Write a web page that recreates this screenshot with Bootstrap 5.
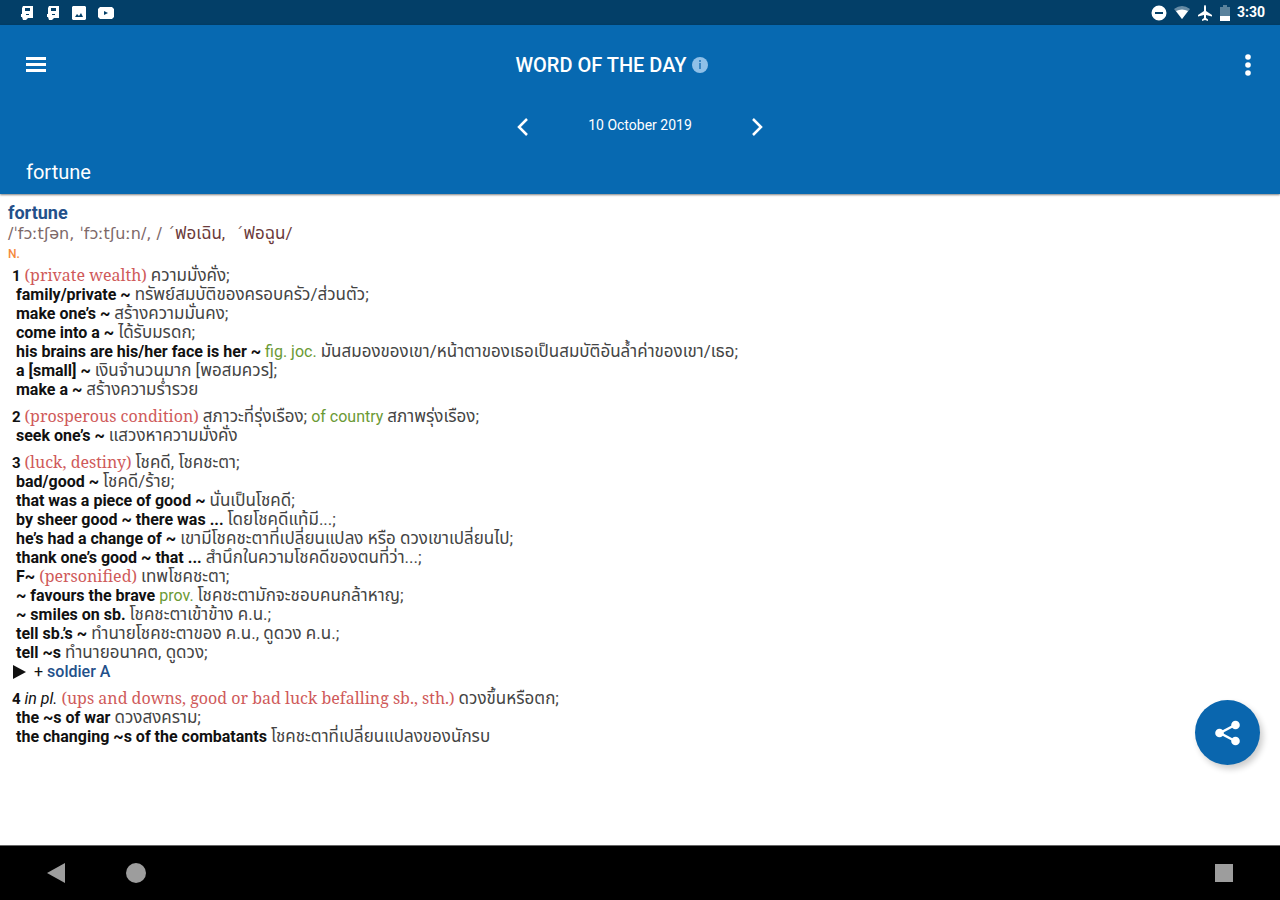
<!DOCTYPE html>
<html lang="en">
<head>
<meta charset="utf-8">
<meta name="viewport" content="width=device-width, initial-scale=1">
<title>Word of the day</title>
<link href="https://cdn.jsdelivr.net/npm/bootstrap@5.3.0/dist/css/bootstrap.min.css" rel="stylesheet">
<style>
body { font-family: Roboto, "Noto Sans Thai", "Noto Sans", sans-serif; background: #fff; color: #111; }
svg { display: block; fill: currentColor; }
.status-bar { height: 25px; background: #033f68; font-size: 14px; line-height: 25px; padding: 0 15px 0 19px; }
.status-left { gap: 10px; }
.status-right { gap: 7px; }
.app-header { background: #0769b1; box-shadow: 0 1px 2px rgba(0, 0, 0, .5); z-index: 1; }
.icon-btn { border: 0; background: none; color: #fff; padding: 0; width: 32px; height: 32px; display: flex; align-items: center; justify-content: center; }
.title-row { height: 80px; padding: 0 16px 0 20px; }
.app-title { font-size: 20px; line-height: 24px; font-weight: 500; padding-right: 60px; }
.date-row { height: 40px; }
.date-text { width: 202px; font-size: 14px; line-height: 20px; }
.entry-tab { font-size: 20px; line-height: 24px; padding: 15px 26px 10px; }
.entry { font-size: 16px; line-height: 19px; padding: 9px 8px 40px; }
.entry p { margin: 0; min-height: 19px; }
.headword { font-size: 18px; line-height: 20px; font-weight: 700; color: #23508a; }
.entry .pron { height: 21px; line-height: 21px; color: #6b4a4a; }
.ipa { font-family: "DejaVu Sans", sans-serif; font-size: 16px; line-height: 16px; color: #7d6868; white-space: pre; }
.entry .pos { height: 22px; font-size: 12px; line-height: 20px; font-weight: 500; color: #f58a3c; }
.sense { padding-left: 4px; margin-bottom: 8px; }
.sense .phrase { padding-left: 4px; }
.num { font-size: 15px; line-height: 14px; }
.gloss { font-family: "Noto Serif", "DejaVu Serif", serif; line-height: 14px; color: #cf5a5a; }
.lbl { color: #6b9a35; }
.th { font-size: 17px; line-height: 14px; color: #444; }
.pron .th { color: #6b3a3a; }
.xref { color: #23508a; font-weight: 500; text-decoration: none; }
.fab { right: 20px; bottom: 80px; width: 65px; height: 65px; background: #0a66ae; color: #fff; box-shadow: 3px 4px 6px rgba(0, 0, 0, .2); }
.nav-keys { height: 55px; background: #000; padding: 0 40px; border-top: 1px solid #666; }
.nav-keys .icon-btn { color: #9d9d9d; }
</style>
</head>
<body>
<div class="d-flex flex-column min-vh-100">
  <div class="status-bar d-flex align-items-center justify-content-between text-white">
    <div class="status-left d-flex align-items-center">
      <svg width="16" height="16" viewBox="0 0 16 16"><path fill-rule="evenodd" d="M4 1h10v12H9l-2 2H4l-1-3H2V9h1V3zM6 3v3h5V3zM7 9v1h3V9z"/></svg>
      <svg width="16" height="16" viewBox="0 0 16 16"><path fill-rule="evenodd" d="M4 1h10v12H9l-2 2H4l-1-3H2V9h1V3zM6 3v3h5V3zM7 9v1h3V9z"/></svg>
      <svg width="16" height="16" viewBox="0 0 16 16"><path fill-rule="evenodd" d="M2 1h12l1 1v12l-1 1H2l-1-1V2zM4 12h8l-2-4-2 3-2-2z"/></svg>
      <svg width="18" height="16" viewBox="0 0 18 16"><path fill-rule="evenodd" d="M3 2h12l2 2v8l-2 2H3l-2-2V4zM7 6v4l4-2z"/></svg>
    </div>
    <div class="status-right d-flex align-items-center">
      <svg width="16" height="16" viewBox="0 0 16 16"><path fill-rule="evenodd" d="M8 0.500a7.500 7.500 0 1 0 0 15a7.500 7.500 0 0 0 0-15zM4 7h8v2H4z"/></svg>
      <svg width="16" height="16" viewBox="0 0 16 16"><path opacity=".4" d="M0 4q8-6 16 0L8 14z"/><path d="M2 6q6-3 12 0L8 14z"/></svg>
      <svg width="16" height="16" viewBox="0 0 16 16"><path d="M8 0q1 0 1 2v4l6 4v1.500L9 10v3l2 1.500V16l-3-1-3 1v-1.500L7 13v-3l-6 1.500V10l6-4V2q0-2 1-2z"/></svg>
      <svg width="10" height="16" viewBox="0 0 10 16"><path opacity=".35" d="M0 2h3V0h4v2h3v9H0z"/><path d="M0 11h10v5H0z"/></svg>
      <span class="fw-bold">3:30</span>
    </div>
  </div>

  <header class="app-header position-relative text-white">
    <div class="title-row d-flex align-items-center justify-content-between">
      <button class="icon-btn" type="button" aria-label="Menu"><svg width="20" height="16" viewBox="0 0 20 16"><path d="M0 0h20v3H0zM0 6h20v3H0zM0 12h20v3H0z"/></svg></button>
      <h1 class="app-title m-0 d-flex align-items-center gap-1">WORD OF THE DAY
        <svg width="18" height="18" viewBox="0 0 18 18"><circle cx="9" cy="9" r="8" fill="#8fc0e8"/><path fill="#3b86c2" d="M8 4h2v2H8zM8 7h2v6H8z"/></svg></h1>
      <button class="icon-btn" type="button" aria-label="More options"><svg width="6" height="22" viewBox="0 0 6 22"><circle cx="3" cy="3" r="2.800"/><circle cx="3" cy="11" r="2.800"/><circle cx="3" cy="19" r="2.800"/></svg></button>
    </div>
    <div class="date-row d-flex align-items-center justify-content-center">
      <button class="icon-btn pt-1" type="button" aria-label="Previous day"><svg width="12" height="20" viewBox="0 0 12 20"><path d="M10 2L2 10l8 8" fill="none" stroke="currentColor" stroke-width="2.500"/></svg></button>
      <span class="date-text text-center">10 October 2019</span>
      <button class="icon-btn pt-1" type="button" aria-label="Next day"><svg width="12" height="20" viewBox="0 0 12 20"><path d="M2 2l8 8-8 8" fill="none" stroke="currentColor" stroke-width="2.500"/></svg></button>
    </div>
    <div class="entry-tab">fortune</div>
  </header>

  <main class="position-relative flex-grow-1">
    <article class="entry">
      <h2 class="headword m-0">fortune</h2>
      <p class="pron"><span class="ipa">/ˈfɔːtʃən, ˈfɔːtʃuːn/, / ˊ</span><span class="th">ฟอเฉิน,</span><span class="ipa">  ˊ</span><span class="th">ฟอฉูน/</span></p>
      <p class="pos">N.</p>
      <section class="sense">
        <p><b class="num">1</b> <span class="gloss">(private wealth)</span> <span class="th">ความมั่งคั่ง;</span></p>
        <p class="phrase"><b>family/private ~</b> <span class="th">ทรัพย์สมบัติของครอบครัว/ส่วนตัว;</span></p>
        <p class="phrase"><b>make one’s ~</b> <span class="th">สร้างความมั่นคง;</span></p>
        <p class="phrase"><b>come into a ~</b> <span class="th">ได้รับมรดก;</span></p>
        <p class="phrase"><b>his brains are his/her face is her ~</b> <span class="lbl">fig. joc.</span> <span class="th">มันสมองของเขา/หน้าตาของเธอเป็นสมบัติอันล้ำค่าของเขา/เธอ;</span></p>
        <p class="phrase"><b>a [small] ~</b> <span class="th">เงินจำนวนมาก [พอสมควร];</span></p>
        <p class="phrase"><b>make a ~</b> <span class="th">สร้างความร่ำรวย</span></p>
      </section>
      <section class="sense">
        <p><b class="num">2</b> <span class="gloss">(prosperous condition)</span> <span class="th">สภาวะที่รุ่งเรือง;</span> <span class="lbl">of country</span> <span class="th">สภาพรุ่งเรือง;</span></p>
        <p class="phrase"><b>seek one’s ~</b> <span class="th">แสวงหาความมั่งคั่ง</span></p>
      </section>
      <section class="sense">
        <p><b class="num">3</b> <span class="gloss">(luck, destiny)</span> <span class="th">โชคดี, โชคชะตา;</span></p>
        <p class="phrase"><b>bad/good ~</b> <span class="th">โชคดี/ร้าย;</span></p>
        <p class="phrase"><b>that was a piece of good ~</b> <span class="th">นั่นเป็นโชคดี;</span></p>
        <p class="phrase"><b>by sheer good ~ there was ...</b> <span class="th">โดยโชคดีแท้มี...;</span></p>
        <p class="phrase"><b>he’s had a change of ~</b> <span class="th">เขามีโชคชะตาที่เปลี่ยนแปลง หรือ ดวงเขาเปลี่ยนไป;</span></p>
        <p class="phrase"><b>thank one’s good ~ that ...</b> <span class="th">สำนึกในความโชคดีของตนที่ว่า...;</span></p>
        <p class="phrase"><b>F~</b> <span class="gloss">(personified)</span> <span class="th">เทพโชคชะตา;</span></p>
        <p class="phrase"><b>~ favours the brave</b> <span class="lbl">prov.</span> <span class="th">โชคชะตามักจะชอบคนกล้าหาญ;</span></p>
        <p class="phrase"><b>~ smiles on sb.</b> <span class="th">โชคชะตาเข้าข้าง ค.น.;</span></p>
        <p class="phrase"><b>tell sb.’s ~</b> <span class="th">ทำนายโชคชะตาของ ค.น., ดูดวง ค.น.;</span></p>
        <p class="phrase"><b>tell ~s</b> <span class="th">ทำนายอนาคต, ดูดวง;</span></p>
        <p class="d-flex align-items-center gap-1"><svg class="me-1" width="14" height="14" viewBox="0 0 14 14"><path d="M1 0l13 7-13 7z"/></svg><span>+</span> <a class="xref" href="#">soldier A</a></p>
      </section>
      <section class="sense">
        <p><b class="num">4</b> <i>in pl.</i> <span class="gloss">(ups and downs, good or bad luck befalling sb., sth.)</span> <span class="th">ดวงขึ้นหรือตก;</span></p>
        <p class="phrase"><b>the ~s of war</b> <span class="th">ดวงสงคราม;</span></p>
        <p class="phrase"><b>the changing ~s of the combatants</b> <span class="th">โชคชะตาที่เปลี่ยนแปลงของนักรบ</span></p>
      </section>
    </article>
    <button class="fab btn rounded-circle border-0 p-0 position-absolute d-flex align-items-center justify-content-center" type="button" aria-label="Share"><svg width="28" height="28" viewBox="0 0 28 28"><path d="M21 6L6 14l15 8" fill="none" stroke="currentColor" stroke-width="2.500"/><circle cx="21.500" cy="6" r="4.300"/><circle cx="5.500" cy="14" r="4.300"/><circle cx="21.500" cy="22" r="4.300"/></svg></button>
  </main>

  <nav class="nav-keys d-flex align-items-center" aria-label="System navigation">
    <button class="icon-btn" type="button" aria-label="Back"><svg width="18" height="20" viewBox="0 0 18 20"><path d="M0 10L18 0v20z"/></svg></button>
    <button class="icon-btn ms-5" type="button" aria-label="Home"><svg width="20" height="20" viewBox="0 0 20 20"><circle cx="10" cy="10" r="10"/></svg></button>
    <button class="icon-btn ms-auto" type="button" aria-label="Recent apps"><svg width="18" height="18" viewBox="0 0 18 18"><path d="M0 0h18v18H0z"/></svg></button>
  </nav>
</div>
<script src="https://cdn.jsdelivr.net/npm/bootstrap@5.3.0/dist/js/bootstrap.bundle.min.js"></script>
</body>
</html>
